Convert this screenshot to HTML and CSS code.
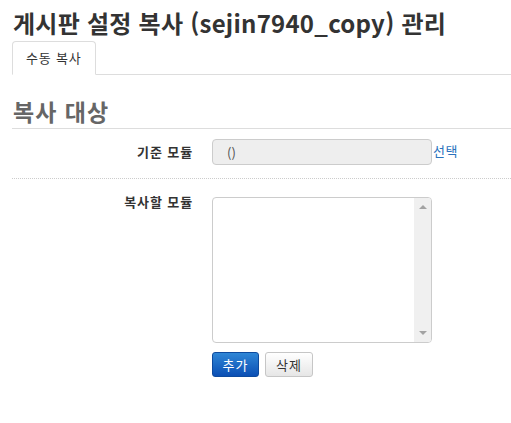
FILE: index.html
```html
<!DOCTYPE html>
<html lang="ko">
<head>
<meta charset="utf-8">
<title>게시판 설정 복사</title>
<link rel="stylesheet" href="styles.css">
</head>
<body>
<h1 class="title">게시판 설정 복사 (sejin7940_copy) 관리</h1>
<ul class="tabs">
  <li class="tab active"><a href="#">수동 복사</a></li>
</ul>
<h2 class="section">복사 대상</h2>
<div class="row row-first">
  <div class="label">기준 모듈</div>
  <div class="control inline">
    <input class="text-input" type="text" value="()" readonly>
    <a class="link" href="#">선택</a>
  </div>
</div>
<div class="row row-second">
  <div class="label label-top">복사할 모듈</div>
  <div class="control">
    <div class="listbox">
      <div class="list-area"></div>
      <div class="scrollbar">
        <span class="arrow-up"></span>
        <span class="arrow-down"></span>
      </div>
    </div>
    <div class="buttons">
      <button class="btn btn-primary" type="button">추가</button>
      <button class="btn btn-default" type="button">삭제</button>
    </div>
  </div>
</div>
</body>
</html>
```
FILE: styles.css
```css
* { box-sizing: border-box; }
html, body { margin: 0; padding: 0; background: #fff; }
body {
  padding: 0 0 0 12px;
  font-family: "Noto Sans CJK KR", "Noto Sans", sans-serif;
  font-size: 13px;
  color: #333;
}
.title {
  margin: 6px 0 0 1px;
  font-size: 24px;
  line-height: 34px;
  font-weight: bold;
  color: #333;
  letter-spacing: 0.25px;
}
.tabs {
  list-style: none;
  margin: 1px 0 0 0;
  padding: 0;
  display: flex;
  border-bottom: 1px solid #ddd;
}
.tab a {
  display: block;
  margin-bottom: -1px;
  padding: 0 14px 0 13px;
  height: 34px;
  line-height: 32px;
  border: 1px solid #ddd;
  border-bottom-color: #fff;
  border-radius: 4px 4px 0 0;
  background: #fff;
  color: #333;
  text-decoration: none;
  font-size: 13px;
  letter-spacing: 0.8px;
}
.section {
  margin: 19px 0 0 0;
  padding: 0 0 0 1px;
  font-size: 23px;
  line-height: 34px;
  font-weight: bold;
  color: #666;
  letter-spacing: 1px;
  border-bottom: 1px solid #ddd;
}
.row {
  display: grid;
  grid-template-columns: 180px 1fr;
  column-gap: 20px;
}
.row-first {
  padding: 10px 0 13px;
  border-bottom: 1px dotted #ccc;
}
.row-second {
  padding: 18px 0 0;
}
.label {
  text-align: right;
  font-weight: bold;
  line-height: 26px;
  color: #333;
  letter-spacing: 0.9px;
  margin-right: -1px;
}
.label-top {
  line-height: 14px;
  margin-top: -2px;
}
.control.inline {
  display: flex;
  align-items: center;
}
.text-input {
  width: 220px;
  height: 26px;
  padding: 0 14px;
  border: 1px solid #ccc;
  border-radius: 4px;
  background: #eee;
  font-family: "Noto Sans CJK KR", sans-serif;
  font-size: 13px;
  color: #555;
  outline: none;
}
.link {
  margin: -4px 0 0 1px;
  color: #2a72bd;
  text-decoration: none;
  font-size: 13px;
  letter-spacing: 0.5px;
}
.listbox {
  width: 220px;
  height: 146px;
  border: 1px solid #ccc;
  border-radius: 4px;
  display: flex;
  overflow: hidden;
  background: #fff;
}
.list-area { flex: 1; }
.scrollbar {
  width: 17px;
  background: #f0f0f0;
  display: flex;
  flex-direction: column;
  justify-content: space-between;
  align-items: center;
  padding: 7px 0 7px;
}
.arrow-up {
  width: 0; height: 0;
  border-left: 4px solid transparent;
  border-right: 4px solid transparent;
  border-bottom: 4px solid #a3a3a3;
}
.arrow-down {
  width: 0; height: 0;
  border-left: 4px solid transparent;
  border-right: 4px solid transparent;
  border-top: 4px solid #a3a3a3;
}
.buttons {
  display: flex;
  gap: 6px;
  margin-top: 9px;
}
.btn {
  height: 25px;
  padding: 0;
  font-family: "Noto Sans CJK KR", sans-serif;
  font-size: 13px;
  line-height: 23px;
  letter-spacing: 1px;
  border-radius: 3px;
  cursor: pointer;
}
.btn-primary {
  width: 47px;
  color: #fff;
  border: 1px solid #0d4a9e;
  background: linear-gradient(#2f86d6, #0b4fb4);
}
.btn-default {
  width: 48px;
  color: #333;
  border: 1px solid #c6c6c6;
  background: linear-gradient(#fff, #e6e6e6);
}
```
